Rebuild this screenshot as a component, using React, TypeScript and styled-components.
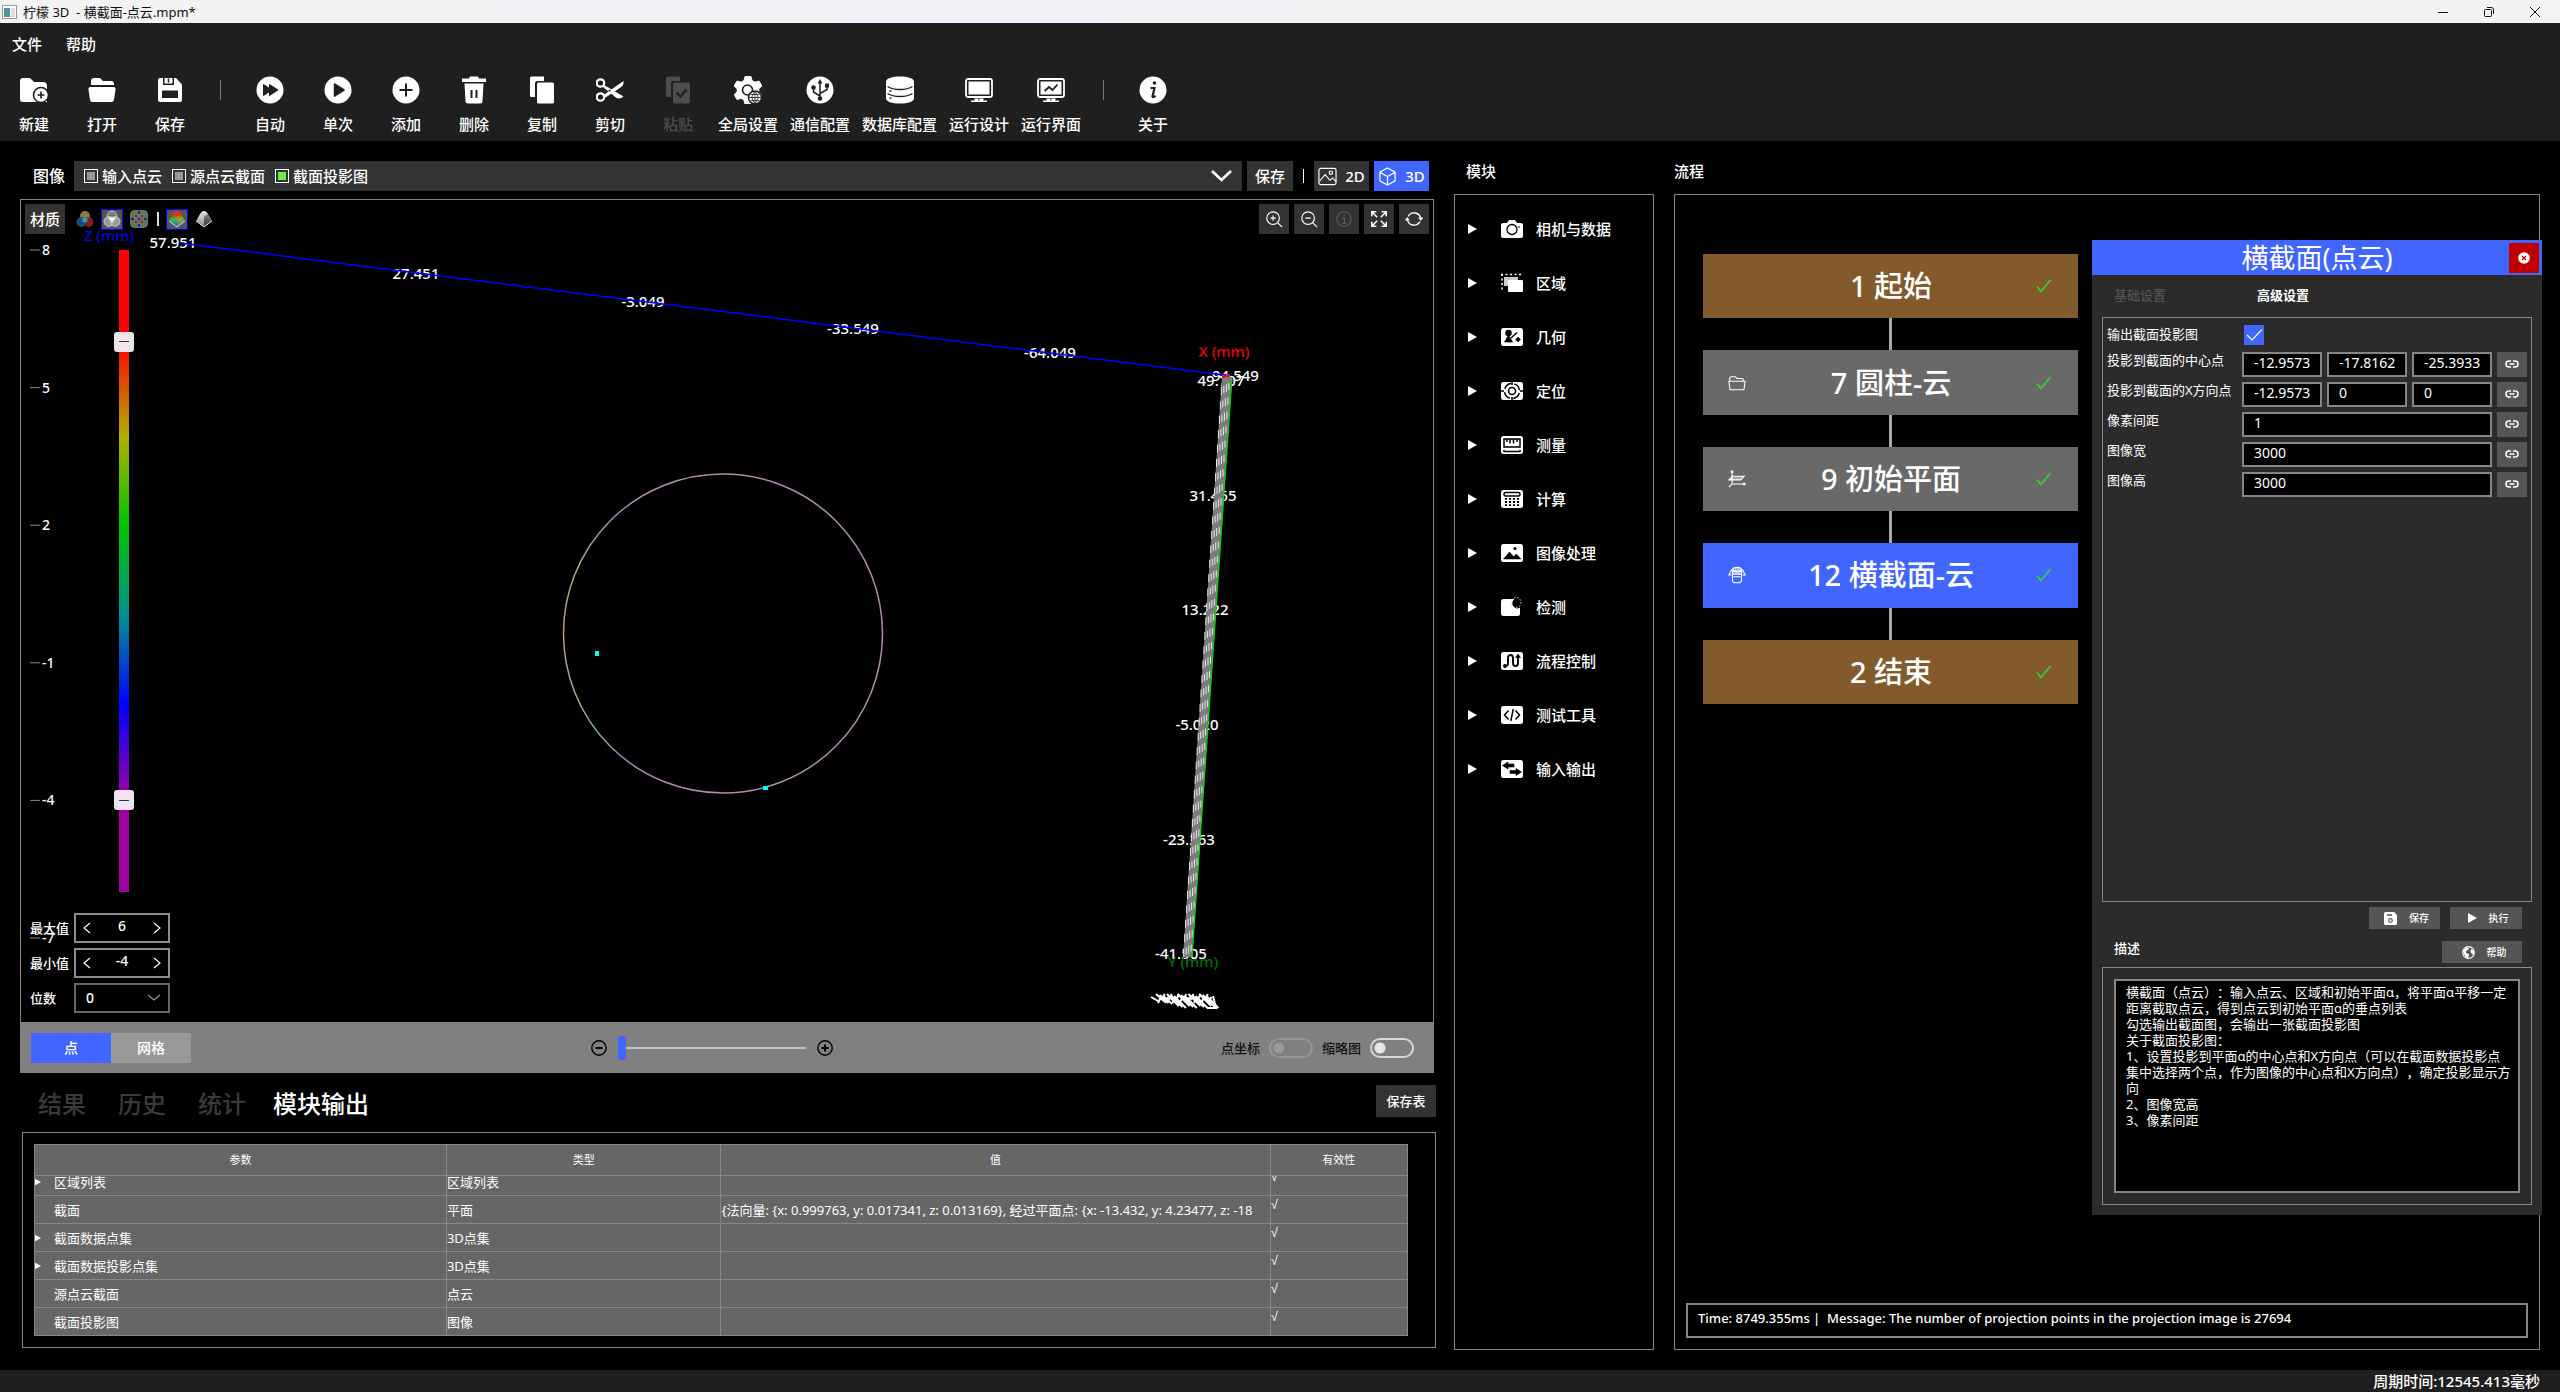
import React from "react";
import styled, { createGlobalStyle } from "styled-components";

const BLUE = "#4166ff";
const LINE = "#868686";
const BAR = "#1f1f1f";
const KEY = "#333333";

const GlobalStyle = createGlobalStyle`
  * { box-sizing: border-box; }
  body {
    margin: 0;
    background: #000;
    color: #fff;
    font: 500 15px/22px "Noto Sans", "Noto Sans CJK SC", sans-serif;
  }
  button, input, select, textarea { font: inherit; color: inherit; margin: 0; border-radius: 0; }
  button { border: 0; padding: 0; background: none; }
  svg { display: block; flex: none; }
`;

/* ---------- frame ---------- */
const Page = styled.div`
  min-height: 100vh;
  display: flex;
  flex-direction: column;
`;
const TitleBar = styled.header`
  height: 23px;
  display: flex;
  align-items: center;
  gap: 6px;
  padding: 0 2px;
  color: #111;
  background: linear-gradient(90deg, #f3f3f3, #f1f0f7 40%, #f3f1f3 55%, #f3f3f3);
  font-size: 13px;
  font-weight: 400;
  white-space: pre;
`;
const WindowKeys = styled.div`
  margin-left: auto;
  display: flex;
`;
const WindowKey = styled.button`
  width: 46px;
  height: 20px;
  display: grid;
  place-items: center;
`;
const MenuBar = styled.nav`
  height: 44px;
  display: flex;
  align-items: center;
  gap: 24px;
  padding: 0 12px 2px;
  background: ${BAR};
`;
const Toolbar = styled.div`
  height: 74px;
  display: flex;
  padding-top: 9px;
  background: ${BAR};
`;
const ToolKey = styled.button`
  min-width: 68px;
  padding: 0 6px;
  display: flex;
  flex-direction: column;
  align-items: center;
  gap: 9px;
  height: 60px;
  &:disabled { color: #4d4d4d; }
`;
const ToolSplit = styled.span`
  width: 1px;
  height: 20px;
  margin: 4px 15px 0 16px;
  background: #777;
`;
const Main = styled.main`
  flex: 1;
  display: grid;
  grid-template-columns: minmax(0, 1fr) 200px minmax(0, 866px);
  gap: 20px;
  padding: 20px;
`;
const StatusBar = styled.footer`
  height: 22px;
  padding-right: 20px;
  background: ${BAR};
  text-align: right;
`;

/* ---------- viewer ---------- */
const Left = styled.section`
  display: flex;
  flex-direction: column;
  min-width: 0;
`;
const SourceRow = styled.div`
  display: flex;
  align-items: center;
  height: 30px;
  gap: 5px;
  margin-bottom: 8px;
  padding: 0 5px 0 13px;
`;
const SourceName = styled.span`
  font-size: 16px;
  margin-right: 4px;
`;
const SourceBox = styled.div`
  flex: 1;
  height: 30px;
  display: flex;
  align-items: center;
  gap: 10px;
  padding: 0 10px;
  background: ${KEY};
`;
const SourceItem = styled.label`
  display: flex;
  align-items: center;
  gap: 4px;
`;
const SourceCheck = styled.input`
  appearance: none;
  width: 14px;
  height: 14px;
  border: 1px solid #fff;
  padding: 2px;
  background: #9a9a9a content-box;
  &:checked { background: #6cf04a content-box; }
`;
const Chevron = styled.button`
  margin-left: auto;
`;
const Key = styled.button<{ $w: number; $on?: boolean }>`
  width: ${(p) => p.$w}px;
  height: 30px;
  display: flex;
  align-items: center;
  justify-content: center;
  gap: 8px;
  background: ${(p) => (p.$on ? BLUE : KEY)};
  &:disabled { color: #5c5c5c; }
`;
const Bar = styled.span`
  width: 1px;
  height: 14px;
  background: #fff;
  margin: 0 5px;
`;
const Viewer = styled.div`
  flex: 1;
  display: flex;
  flex-direction: column;
  border: 1px solid ${LINE};
  border-bottom: 0;
`;
const Canvas = styled.div`
  position: relative;
  flex: 1;
  display: flex;
  flex-direction: column;
  justify-content: space-between;
`;
const Scene = styled.svg`
  position: absolute;
  inset: 0;
  width: 100%;
  height: 100%;
`;
const RangeLimit = styled.input`
  position: absolute;
  left: 93px;
  top: 40px;
  width: 20px;
  height: 662px;
  appearance: none;
  writing-mode: vertical-lr;
  direction: rtl;
  background: none;
  pointer-events: none;
  &::-webkit-slider-thumb {
    appearance: none;
    pointer-events: auto;
    width: 20px;
    height: 20px;
    border-radius: 3px;
    background: linear-gradient(#333, #333) center / 10px 1px no-repeat, rgba(245, 240, 245, 0.95);
  }
`;
const ViewTools = styled.div`
  position: relative;
  display: flex;
  align-items: center;
  padding: 4px;
  gap: 5px;
`;
const MaterialKeys = styled.div`
  display: flex;
  align-items: center;
  gap: 5px;
  margin: 0 auto 0 4px;
`;
const ShadeKey = styled.button<{ $on?: boolean }>`
  width: 22px;
  height: 21px;
  display: grid;
  place-items: center;
  border: 1px solid ${(p) => (p.$on ? "#0000ff" : "transparent")};
  background: ${(p) => (p.$on ? "#555" : "none")};
`;
const ShadeSplit = styled.span`
  width: 2px;
  height: 14px;
  margin: 0 2px;
  background: #ddd;
`;
const Params = styled.div`
  position: relative;
  display: grid;
  grid-template-columns: 44px 96px;
  row-gap: 5px;
  align-items: center;
  padding: 0 0 9px 9px;
  font-size: 13px;
`;
const Spin = styled.div<{ $dim?: boolean }>`
  display: flex;
  align-items: center;
  height: 30px;
  padding: 0 ${(p) => (p.$dim ? 8 : 5)}px;
  border: 2px solid ${(p) => (p.$dim ? "#666" : "#8c8c8c")};
  input, select {
    flex: 1;
    width: 40px;
    height: 22px;
    padding: 0 0 4px;
    border: 0;
    background: none;
    font-size: 14px;
    text-align: center;
    outline: 0;
  }
  select { appearance: none; text-align: left; padding: 0 2px; }
`;
const ViewFoot = styled.div`
  height: 51px;
  margin: 0 -1px;
  padding: 0 20px 0 11px;
  display: grid;
  grid-template-columns: 1fr auto 1fr;
  align-items: center;
  background: #808080;
`;
const Modes = styled.div`
  display: flex;
  font-size: 14px;
`;
const ModeKey = styled.button<{ $on?: boolean }>`
  width: 80px;
  height: 30px;
  background: ${(p) => (p.$on ? BLUE : "#999")};
`;
const PointSize = styled.div`
  display: flex;
  align-items: center;
  gap: 11px;
  margin-right: 21px;
`;
const PointRange = styled.input`
  appearance: none;
  width: 188px;
  height: 24px;
  background: linear-gradient(#c2c2c2, #c2c2c2) center / 100% 2px no-repeat;
  &::-webkit-slider-thumb {
    appearance: none;
    width: 8px;
    height: 24px;
    border-radius: 3px;
    background: ${BLUE};
  }
`;
const Switches = styled.div`
  display: flex;
  justify-content: flex-end;
  gap: 9px;
  color: #111;
  font-size: 13px;
`;
const SwitchLabel = styled.label`
  display: flex;
  align-items: center;
  gap: 9px;
`;
const Switch = styled.input`
  appearance: none;
  width: 44px;
  height: 20px;
  border: 2px solid #d8d8d8;
  border-radius: 10px;
  background: radial-gradient(circle at 8px 8px, #e6e6e6 5px, transparent 6px);
  &:disabled {
    border-color: #959595;
    background: radial-gradient(circle at 8px 8px, #999 5px, transparent 6px);
  }
`;

/* ---------- results ---------- */
const Tabs = styled.div`
  display: flex;
  height: 32px;
  margin: 12px -2px 15px 2px;
`;
const Tab = styled.button<{ $on?: boolean }>`
  min-width: 80px;
  padding: 6px 11px 0;
  font-size: 24px;
  line-height: 26px;
  color: ${(p) => (p.$on ? "#fff" : "#3a3a3a")};
`;
const SaveTable = styled.button`
  width: 60px;
  margin-left: auto;
  background: ${KEY};
  font-size: 13px;
`;
const TableFrame = styled.div`
  margin: 0 -2px 2px 2px;
  padding: 11px 27px 11px 11px;
  border: 1px solid ${LINE};
`;
const Table = styled.table`
  width: 100%;
  table-layout: fixed;
  border-collapse: collapse;
  background: #666;
  font-size: 13px;
  font-weight: 400;
  th, td { border: 1px solid ${LINE}; padding: 0; text-align: left; }
  th { height: 31px; font-size: 11px; font-weight: 400; text-align: center; }
  col:nth-child(1) { width: 30%; }
  col:nth-child(2) { width: 20%; }
  col:nth-child(3) { width: 40%; }
`;
const Clip = styled.div<{ $cut?: boolean }>`
  height: ${(p) => (p.$cut ? 19 : 27)}px;
  display: flex;
  align-items: flex-end;
  overflow: hidden;
`;
const CellText = styled.span`
  display: flex;
  align-items: center;
  flex: none;
  height: 27px;
  white-space: nowrap;
`;
const Mark = styled(CellText)`
  padding-bottom: 10px;
  font-family: "Liberation Sans", "Noto Sans CJK SC", sans-serif;
`;
const Fold = styled.span`
  width: 19px;
`;

/* ---------- modules ---------- */
const Column = styled.section`
  display: flex;
  flex-direction: column;
  gap: 13px;
  min-width: 0;
`;
const ColumnName = styled.h2<{ $inset?: boolean }>`
  margin: 0;
  padding-left: ${(p) => (p.$inset ? 12 : 0)}px;
  font: inherit;
  line-height: 20px;
`;
const Panel = styled.div`
  position: relative;
  flex: 1;
  display: flex;
  flex-direction: column;
  border: 1px solid ${LINE};
`;
const ModuleList = styled.ul`
  list-style: none;
  margin: 0;
  padding: 7px 13px;
`;
const ModuleKey = styled.button`
  width: 100%;
  height: 54px;
  display: flex;
  align-items: center;
  svg:first-child { margin-right: 24px; }
  svg:nth-child(2) { margin-right: 13px; }
`;

/* ---------- flow ---------- */
const Chain = styled.div`
  width: 375px;
  height: 450px;
  margin: 59px 0 auto 28px;
  display: flex;
  flex-direction: column;
  align-items: center;
`;
const Link = styled.span`
  width: 3px;
  height: 32px;
  background: #a8a8a8;
`;
const Node = styled.button<{ $tone: string }>`
  flex: 1;
  width: 100%;
  display: grid;
  grid-template-columns: 22px 1fr 22px;
  align-items: center;
  padding: 0 24px 0 25px;
  background: ${(p) => p.$tone};
  font-size: 29px;
  line-height: 40px;
`;
const Message = styled.output`
  height: 35px;
  margin: 0 11px 11px;
  padding: 2px 10px;
  border: 2px solid ${LINE};
  font-size: 13px;
  white-space: pre;
`;

/* ---------- dialog ---------- */
const Dialog = styled.div`
  position: absolute;
  top: 45px;
  right: -3px;
  width: 450px;
  background: #2b2b2b;
  font-size: 13px;
  padding-bottom: 10px;
`;
const DialogHead = styled.div`
  height: 35px;
  padding: 0 3px;
  display: grid;
  grid-template-columns: 30px 1fr 30px;
  align-items: center;
  background: ${BLUE};
`;
const DialogTitle = styled.h3`
  grid-column: 2;
  margin: 0;
  font-size: 27px;
  line-height: 34px;
  font-weight: 400;
  text-align: center;
`;
const Close = styled.button`
  height: 30px;
  display: grid;
  place-items: center;
  background: #c00000;
`;
const DialogTabs = styled.div`
  height: 42px;
  display: flex;
  gap: 91px;
  padding: 0 22px 2px;
`;
const DialogTab = styled.button<{ $on?: boolean }>`
  color: ${(p) => (p.$on ? "#fff" : "#595959")};
  font-weight: ${(p) => (p.$on ? 700 : 400)};
`;
const Form = styled.div`
  height: 585px;
  margin: 0 10px;
  padding: 4px 4px;
  border: 1px solid ${LINE};
  font-weight: 400;
`;
const Row = styled.div`
  height: 30px;
  display: grid;
  grid-template-columns: 130px minmax(0, 1fr) 30px;
  column-gap: 5px;
  align-items: center;
  label { padding-bottom: 8px; white-space: nowrap; }
`;
const CheckRow = styled(Row)`
  grid-template-columns: 137px 20px;
  column-gap: 0;
  height: 26px;
  margin-bottom: 1px;
  label { padding: 0 0 2px; }
`;
const Tick = styled.input`
  appearance: none;
  width: 20px;
  height: 20px;
  background: ${BLUE};
`;
const TickCell = styled.span`
  position: relative;
  height: 20px;
  svg { position: absolute; inset: 0; pointer-events: none; }
`;
const Fields = styled.div`
  display: flex;
  gap: 5px;
`;
const Field = styled.input`
  flex: 1;
  min-width: 0;
  height: 25px;
  padding: 0 10px 4px;
  border: 2px solid ${LINE};
  background: #000;
  font-size: 14px;
`;
const LinkKey = styled.button`
  height: 25px;
  display: grid;
  place-items: center;
  background: #555;
`;
const Actions = styled.div`
  display: flex;
  justify-content: flex-end;
  gap: 10px;
  padding: 5px 20px 12px;
`;
const Action = styled.button<{ $w: number }>`
  width: ${(p) => p.$w}px;
  height: 22px;
  display: flex;
  align-items: center;
  justify-content: center;
  gap: 12px;
  padding-left: 4px;
  background: #555;
  font-size: 10px;
`;
const NoteHead = styled.div`
  display: flex;
  justify-content: space-between;
  padding: 0 20px 4px 22px;
  label { line-height: 14px; }
`;
const NoteFrame = styled.div`
  margin: 0 10px;
  padding: 11px;
  border: 1px solid ${LINE};
`;
const Note = styled.textarea`
  display: block;
  width: 100%;
  height: 214px;
  padding: 3px 6px 3px 10px;
  border: 2px solid ${LINE};
  background: #000;
  resize: none;
  overflow: hidden;
  font-weight: 400;
  line-height: 16px;
  text-spacing-trim: space-all;
`;

/* ---------- icons ---------- */
const D = BAR;
const Big = ({ children }: { children: React.ReactNode }) => (
  <svg width="28" height="28" viewBox="0 0 28 28" fill="currentColor">{children}</svg>
);
const Disc = ({ children }: { children: React.ReactNode }) => (
  <Big><circle cx="14" cy="14" r="13.5" />{children}</Big>
);
const toolIcons: Record<string, React.ReactNode> = {
  新建: (
    <Big>
      <path d="M0 5a3 3 0 0 1 3-3h7l4 4h9a4 4 0 0 1 4 4v16H3a3 3 0 0 1-3-3z" />
      <circle cx="21" cy="19" r="7.5" stroke={D} strokeWidth="1.6" />
      <path d="M21 15.5v7M17.500 19h7" stroke={D} strokeWidth="1.6" />
    </Big>
  ),
  打开: (
    <Big>
      <path d="M3 9V5a3 3 0 0 1 3-3h6l3 3h8a3 3 0 0 1 3 3v1z" />
      <path d="M2 11h24a2 2 0 0 1 1.600 2L26 24a2.500 2.500 0 0 1-2.500 2h-19A2.500 2.500 0 0 1 2 24L.4 13A2 2 0 0 1 2 11z" />
    </Big>
  ),
  保存: (
    <Big>
      <path d="M2 4a2 2 0 0 1 2-2h16l6 6.500V24a2 2 0 0 1-2 2H4a2 2 0 0 1-2-2z" />
      <path d="M7 2v7h11V2M6 14.500h16V22H6z" fill={D} />
      <path d="M8.500 2h8v5.500h-8z" /><path d="M12.500 2.500v4" stroke={D} strokeWidth="1.500" />
    </Big>
  ),
  自动: <Disc><path d="M7.500 8.500l6 4v-4l8.500 5.500-8.500 5.500v-4l-6 4z" fill={D} stroke={D} strokeLinejoin="round" /></Disc>,
  单次: <Disc><path d="M10.500 8l9.500 6-9.500 6z" fill={D} stroke={D} strokeWidth="1.500" strokeLinejoin="round" /></Disc>,
  添加: <Disc><path d="M14 7.500v13M7.500 14h13" stroke={D} strokeWidth="2" /></Disc>,
  删除: (
    <Big>
      <path d="M2 2.500h7l1-2h8l1 2h7v3.500H2zM4.500 7.500h19L22.500 25a2.500 2.500 0 0 1-2.500 2.500H8A2.500 2.500 0 0 1 5.500 25z" />
      <path d="M11.500 14v8M16.500 14v8" stroke={D} strokeWidth="2" />
    </Big>
  ),
  复制: (
    <Big>
      <path d="M2 2a1.500 1.500 0 0 1 1.500-1.500H16V5H9.500A2.500 2.500 0 0 0 7 7.500V21H3.500A1.500 1.500 0 0 1 2 19.500z" />
      <rect x="9" y="6.500" width="17" height="21" rx="1.500" />
    </Big>
  ),
  剪切: (
    <Big>
      <g fill="none" stroke="currentColor" strokeWidth="2.200">
        <circle cx="4.500" cy="7" r="3.700" /><circle cx="4.500" cy="21" r="3.700" />
      </g>
      <path d="M7 19.500L27.500 5c.5 2.500-.5 5-3 6.500L9.500 21.500zM7 8.500L15 13l12.500 7.500c-2 2-4.500 2.500-7 1.500L7.500 11.500z" />
      <circle cx="13.500" cy="14.500" r="1" fill={D} />
    </Big>
  ),
  粘贴: (
    <Big>
      <path d="M2 2a1.500 1.500 0 0 1 1.500-1.500H16V5H9.500A2.500 2.500 0 0 0 7 7.500V21H3.500A1.500 1.500 0 0 1 2 19.500z" />
      <rect x="9" y="6.500" width="17" height="21" rx="1.500" />
      <path d="M12.500 16.500l4 4 6-7" stroke={D} strokeWidth="2.400" fill="none" />
    </Big>
  ),
  全局设置: (
    <Big>
      <path d="M11 .5h6l1 4 3 1.700 4-1.200 2.800 5-3 2.800v3l3 2.800-2.800 5-4-1.200-3 1.700-1 3.900h-6l-1-4-3-1.700-4 1.300-2.800-5 3-2.800v-3L.2 10 3 5l4 1.200 3-1.700z" strokeLinejoin="round" stroke="currentColor" />
      <circle cx="13.500" cy="14" r="5" fill="none" stroke={D} strokeWidth="1.600" />
      <circle cx="21" cy="21.500" r="6.500" stroke={D} strokeWidth="1.500" />
      <path d="M15 21.500h12M21 15.500v12M16.500 18.500h9M16.500 24.500h9M21 15.500c-4 4-4 8 0 12M21 15.500c4 4 4 8 0 12" fill="none" stroke={D} strokeWidth=".8" />
    </Big>
  ),
  通信配置: (
    <Disc>
      <path d="M14 5v18M14 20l-6.500-4v-4M14 17.500l7-4V9" fill="none" stroke={D} strokeWidth="1.500" />
      <path d="M14 3l2.500 4.500h-5z" fill={D} />
      <circle cx="14" cy="22.500" r="2.200" fill={D} /><circle cx="7.500" cy="11.500" r="2.300" fill={D} />
      <rect x="19" y="7.500" width="4" height="4" fill={D} />
    </Disc>
  ),
  数据库配置: (
    <Big>
      <path d="M0 5.500C0 2.500 6 .5 14 .5s14 2 14 5v17c0 3-6 5-14 5s-14-2-14-5z" />
      <path d="M1.500 10.500c6 4 19 4 25 0M1.500 17.500c6 4 19 4 25 0" fill="none" stroke={D} strokeWidth="1.500" />
      <path d="M3.500 15h2M3.500 22h2" stroke={D} strokeWidth="1.500" />
    </Big>
  ),
  运行设计: (
    <Big>
      <rect x="1" y="3" width="26" height="18" rx="2" fill="none" stroke="currentColor" strokeWidth="1.800" />
      <path d="M3.500 5.500h21v13h-21zM9.500 22.500h4v2h1v-2h4v2h3.500V26h-16v-1.500h3.500z" />
    </Big>
  ),
  运行界面: (
    <Big>
      <rect x="1" y="3" width="26" height="18" rx="2" fill="none" stroke="currentColor" strokeWidth="1.800" />
      <path d="M3.500 5.500h21v13h-21zM9.500 22.500h4v2h1v-2h4v2h3.500V26h-16v-1.500h3.500z" />
      <path d="M7.500 15l4.500-4 3.500 3 5-5.500" fill="none" stroke={D} strokeWidth="1.800" />
    </Big>
  ),
  关于: (
    <Disc>
      <circle cx="15.500" cy="7" r="1.800" fill={D} />
      <path d="M11.500 12h4l-2 8.500c0 1 1 1 3-.8" fill="none" stroke={D} strokeWidth="2.200" />
    </Disc>
  ),
};

const Small = ({ children }: { children: React.ReactNode }) => (
  <svg width="22" height="20" viewBox="0 0 22 20" fill="#fff">{children}</svg>
);
const Tile = ({ children }: { children: React.ReactNode }) => (
  <Small>
    <rect y="1" width="22" height="18" rx="2.500" />
    <g fill="none" stroke="#000" strokeWidth="1.500">{children}</g>
  </Small>
);
const modules: [string, React.ReactNode][] = [
  ["相机与数据", (
    <Small>
      <path d="M2 4h4l2-3h6l2 3h4a2 2 0 0 1 2 2v11a2 2 0 0 1-2 2H2a2 2 0 0 1-2-2V6a2 2 0 0 1 2-2z" />
      <circle cx="11" cy="10.500" r="5" fill="none" stroke="#000" strokeWidth="1.300" />
      <path d="M17 8h2" stroke="#000" />
    </Small>
  )],
  ["区域", (
    <Small>
      <path d="M0 1.500h20M1 1v18" stroke="#fff" strokeWidth="1.500" strokeDasharray="2 2.500" />
      <path d="M3 4h14v9H3z" fill="#ccc" /><rect x="7" y="7" width="15" height="12" rx="1" />
    </Small>
  )],
  ["几何", (
    <Tile>
      <circle cx="7.500" cy="6" r="2.500" fill="#000" />
      <path d="M7.500 8l4 7h-8zM17 10l2.500 2.500L17 15l-2.500-2.500z" fill="#000" strokeWidth=".6" />
      <path d="M10 11l6-5.500" />
    </Tile>
  )],
  ["定位", (
    <Tile>
      <circle cx="11" cy="10" r="3.500" /><circle cx="11" cy="10" r="7.500" strokeDasharray="8.500 3.300" strokeDashoffset="-2" />
      <path d="M11 1v3M11 16v3M0 10h3M19 10h3" />
    </Tile>
  )],
  ["测量", <Tile><path d="M3 4h16v8H3zM6 4v3M9 4v4.500M12.500 4v4.500M16 4v3M3 15v1.500h16V15" /></Tile>],
  ["计算", (
    <Tile>
      <rect x="3" y="3.500" width="16" height="3.500" rx="1.500" />
      <path d="M5 9v8M9 9v8M13 9v8M17 9v8" strokeWidth="2.200" strokeDasharray="1.800 1.300" />
    </Tile>
  )],
  ["图像处理", <Tile><path d="M2.500 16l6-7 4 4.500 3-2.500 4.500 5z" fill="#000" strokeWidth=".5" /><circle cx="14" cy="5.500" r=".8" fill="#000" /></Tile>],
  ["检测", (
    <Small>
      <rect y="2" width="19" height="17" rx="2.500" />
      <path d="M13 2.500c-3 3-2 8 3 9 2 0 3-1 4-2V1h-6z" fill="#000" />
      <circle cx="15" cy="5.500" r="5" fill="none" stroke="#ccc" strokeDasharray="1.500 1.500" />
    </Small>
  )],
  ["流程控制", (
    <Tile>
      <path d="M4 15c3 0 3-1 3-4V7c0-4 5-4 5 0v5c0 4 5 4 5 0V6" strokeWidth="1.900" />
      <circle cx="4" cy="15" r="1.200" fill="#000" /><path d="M17 3l2.500 3.500h-5z" fill="#000" strokeWidth=".5" />
    </Tile>
  )],
  ["测试工具", <Tile><path d="M7.500 5.500L3.500 10l4 4.500M14.500 5.500l4 4.500-4 4.500M12.300 4l-2.500 12" /></Tile>],
  ["输入输出", (
    <Tile>
      <path d="M1.500 6.500L7 3v2h6v3H7v2zM20.500 13L15 9.500v2H9v3h6v2z" fill="#000" strokeWidth=".6" />
    </Tile>
  )],
];

const Arrow = ({ size = 9 }: { size?: number }) => (
  <svg width={size} height="10" viewBox="0 0 9 10" fill="#fff"><path d="M0 0l9 5-9 5z" /></svg>
);
const Stroke = ({ w = 18, box = 20, width = 1.3, children }: { w?: number; box?: number; width?: number; children: React.ReactNode }) => (
  <svg width={w} height={w} viewBox={`0 0 ${box} ${box}`} fill="none" stroke="currentColor" strokeWidth={width}>{children}</svg>
);
const Angle = ({ d, dim }: { d: string; dim?: boolean }) => (
  <svg width="12" height="12" viewBox="0 0 12 12" fill="none" stroke={dim ? "#999" : "#fff"} strokeWidth="1.200"><path d={d} /></svg>
);
const Gem = ({ id, colors, left, right }: { id: string; colors: string[]; left: string; right: string }) => (
  <svg width="18" height="17" viewBox="0 0 18 17">
    <defs>
      <linearGradient id={id} x1="0" y1="0" x2="0" y2="1">
        {colors.map((c, i) => <stop key={c} offset={i / (colors.length - 1)} stopColor={c} />)}
      </linearGradient>
    </defs>
    <path d="M9 0c2 0 3 1.500 4 3l4 7-8 6-8-6 4-7c1-1.500 2-3 4-3z" fill={`url(#${id})`} />
    <path d="M5 3l4 3v9l-7-5z" fill={left} fillOpacity=".35" />
    <path d="M13 3L9 6v9l7-5z" fill={right} fillOpacity=".45" />
    <path d="M1 10l8 6 8-6" fill="none" stroke="#ddd" />
  </svg>
);

/* ---------- 3D scene ---------- */
const zLabels: [string, number, number][] = [
  ["57.951", 173, 243], ["27.451", 416, 274], ["-3.049", 643, 302],
  ["-33.549", 853, 329], ["-64.049", 1050, 353], ["-94.549", 1233, 376],
];
const yLabels: [string, number, number][] = [
  ["49.707", 1221, 381], ["31.465", 1213, 496], ["13.222", 1205, 610],
  ["-5.020", 1197, 725], ["-23.263", 1189, 840], ["-41.505", 1181, 954],
];
const hatch = Array.from({ length: 40 }, (_, i) => i);
const pile = Array.from({ length: 15 }, (_, i) => i);

const PlotScene = () => (
  <Scene viewBox="21 200 1412 822" preserveAspectRatio="xMinYMin meet" fontSize="15" fill="#fff" textAnchor="middle">
    <defs>
      <linearGradient id="heat" x1="0" y1="250" x2="0" y2="892" gradientUnits="userSpaceOnUse">
        <stop offset="0" stopColor="#ff0000" /><stop offset="0.143" stopColor="#ff0000" />
        <stop offset="0.292" stopColor="#b0b000" /><stop offset="0.428" stopColor="#00c400" />
        <stop offset="0.570" stopColor="#009090" /><stop offset="0.708" stopColor="#0000ff" />
        <stop offset="0.857" stopColor="#a000a0" /><stop offset="1" stopColor="#a000a0" />
      </linearGradient>
      <linearGradient id="ring" x1="563" y1="0" x2="883" y2="0" gradientUnits="userSpaceOnUse">
        <stop offset="0" stopColor="#b89c84" /><stop offset="0.050" stopColor="#a8b084" />
        <stop offset="0.090" stopColor="#80b088" /><stop offset="0.140" stopColor="#80a8a8" />
        <stop offset="0.170" stopColor="#8088b8" /><stop offset="0.230" stopColor="#b08cb0" />
        <stop offset="1" stopColor="#b08cb0" />
      </linearGradient>
    </defs>
    <rect x="119" y="250" width="10" height="642" fill="url(#heat)" />
    <g textAnchor="start" fontSize="14">
      {[8, 5, 2, -1, -4, -7].map((n, i) => (
        <g key={n}>
          <path d={`M30 ${250 + i * 137.6}h10`} stroke="#888" />
          <text x="42" y={255 + i * 137.6}>{n}</text>
        </g>
      ))}
    </g>
    <text x="109" y="241" fill="#0000e0">Z (mm)</text>
    {zLabels.map(([t, x, y]) => <text key={t} x={x} y={y + 5}>{t}</text>)}
    <path d="M180 243L1232 376" stroke="#0000ff" strokeWidth="1.500" />
    <text x="1224" y="357" fill="#f00000">X (mm)</text>
    {yLabels.map(([t, x, y]) => <text key={t} x={x} y={y + 5}>{t}</text>)}
    <text x="1193" y="967" fill="#007000">Y (mm)</text>
    <path d="M1222 377h10L1192 957h-9z" fill="#7c7c7c" />
    <g stroke="#e8e8e8" strokeWidth="1">
      {hatch.map((i) => {
        const y = 387 + i * 14.4;
        const x = 1222 - (y - 377) * 0.067;
        return <path key={i} d={`M${x} ${y}v8M${x + 2.500} ${y - 1}v7M${x + 5} ${y - 3}v8M${x + 7.500} ${y - 4}v7`} />;
      })}
    </g>
    <path d="M1232 377L1192 957" stroke="#00e000" strokeWidth="1.200" />
    <path d="M1222 377l8-2" stroke="#f00" strokeWidth="2" />
    <g fill="none" stroke="#fff" strokeWidth="2">
      {pile.map((i) => (
        <path key={i} d={`M${1156 + i * 3.600} ${994 + (i % 3)}l${i < 3 ? 9 : 12} ${i < 3 ? 8 : 12}M${1158 + i * 3.600} ${1003 - (i % 2) * 3}l3-6`} />
      ))}
      <path d="M1151 997l7 4M1207 1008h9l-3-12" />
    </g>
    <circle cx="723" cy="633.500" r="159.500" fill="none" stroke="url(#ring)" strokeWidth="1.500" />
    <path d="M595 651h4v5h-4zM763 786h5v4h-5z" fill="#00ffff" />
  </Scene>
);

const rows: [string, string, string, boolean][] = [
  ["区域列表", "区域列表", "", true],
  ["截面", "平面", "{法向量: {x: 0.999763, y: 0.017341, z: 0.013169}, 经过平面点: {x: -13.432, y: 4.23477, z: -18", false],
  ["截面数据点集", "3D点集", "", true],
  ["截面数据投影点集", "3D点集", "", true],
  ["源点云截面", "点云", "", false],
  ["截面投影图", "图像", "", false],
];

const nodes: [string, string, React.ReactNode][] = [
  ["1 起始", "#835a2c", null],
  ["7 圆柱-云", "#696969", (
    <Stroke key="f" width={1.2}><path d="M2 8V4.500A1.500 1.500 0 0 1 3.500 3H8l2 2h5.500A1.500 1.500 0 0 1 17 6.500V8M1 8h18l-1 8a1.500 1.500 0 0 1-1.500 1.500h-13A1.500 1.500 0 0 1 2 16z" /></Stroke>
  )],
  ["9 初始平面", "#696969", (
    <Stroke key="a" width={1.2}><path d="M4.500 1v14.500H19M4.500 15.500L1 19" /><path d="M1 11l4-4h13l-4 4z" fill="#fff6" /><circle cx="4.500" cy="2" r="1" /><circle cx="18" cy="15.500" r="1" /></Stroke>
  )],
  ["12 横截面-云", BLUE, (
    <Stroke key="c" width={1.2}><ellipse cx="10" cy="4" rx="5" ry="2.500" fill="#fff8" /><path d="M5 6h10v3H5z" fill="#fff6" /><path d="M5 4v12c0 3.500 10 3.500 10 0V4M4 4L1 10h3M16 4l3 6h-3M6 12h8" /></Stroke>
  )],
  ["2 结束", "#835a2c", null],
];

const fields: [string, string[]][] = [
  ["投影到截面的中心点", ["-12.9573", "-17.8162", "-25.3933"]],
  ["投影到截面的X方向点", ["-12.9573", "0", "0"]],
  ["像素间距", ["1"]],
  ["图像宽", ["3000"]],
  ["图像高", ["3000"]],
];

const note = `横截面（点云）：输入点云、区域和初始平面α，将平面α平移一定距离截取点云，得到点云到初始平面α的垂点列表
勾选输出截面图，会输出一张截面投影图
关于截面投影图：
1、设置投影到平面α的中心点和X方向点（可以在截面数据投影点集中选择两个点，作为图像的中心点和X方向点），确定投影显示方向
2、图像宽高
3、像素间距`;

export default function App() {
  const key = (name: string) => (
    <ToolKey key={name} disabled={name === "粘贴"}>{toolIcons[name]}{name}</ToolKey>
  );
  return (
    <Page>
      <GlobalStyle />
      <TitleBar>
        <svg width="15" height="14" viewBox="0 0 15 14">
          <rect x=".5" y=".5" width="14" height="13" fill="#fff" stroke="#999" />
          <path d="M2 3h6v9H2z" fill="#4a9a90" /><path d="M9 3h4v9H9z" fill="#ddd" /><path d="M2 3h6v4H2z" fill="#5b8cb8" />
        </svg>
        <span>{"柠檬 3D  - 横截面-点云.mpm*"}</span>
        <WindowKeys>
          <WindowKey aria-label="最小化"><Stroke w={10} box={10} width={1}><path d="M0 5.500h10" /></Stroke></WindowKey>
          <WindowKey aria-label="还原"><Stroke w={10} box={10} width={1}><rect x=".5" y="2.500" width="7" height="7" rx="1" /><path d="M3 .5h4.500a2 2 0 0 1 2 2V7" /></Stroke></WindowKey>
          <WindowKey aria-label="关闭"><Stroke w={10} box={10} width={1}><path d="M0 0l10 10M10 0L0 10" /></Stroke></WindowKey>
        </WindowKeys>
      </TitleBar>
      <MenuBar><button>文件</button><button>帮助</button></MenuBar>
      <Toolbar>
        {["新建", "打开", "保存"].map(key)}
        <ToolSplit />
        {["自动", "单次", "添加", "删除", "复制", "剪切", "粘贴", "全局设置", "通信配置", "数据库配置", "运行设计", "运行界面"].map(key)}
        <ToolSplit />
        {key("关于")}
      </Toolbar>

      <Main>
        <Left>
          <SourceRow>
            <SourceName>图像</SourceName>
            <SourceBox>
              <SourceItem><SourceCheck type="checkbox" />输入点云</SourceItem>
              <SourceItem><SourceCheck type="checkbox" />源点云截面</SourceItem>
              <SourceItem><SourceCheck type="checkbox" defaultChecked />截面投影图</SourceItem>
              <Chevron aria-label="展开">
                <svg width="21" height="12" viewBox="0 0 21 12" fill="none" stroke="#fff" strokeWidth="2.600"><path d="M1 1l9.500 9L20 1" /></svg>
              </Chevron>
            </SourceBox>
            <Key $w={46}>保存</Key>
            <Bar />
            <Key $w={55}>
              <Stroke w={19} width={1.2}><rect x="1" y="1.500" width="18" height="17" rx="2" /><circle cx="13.500" cy="6" r="1.800" /><path d="M1.500 15l6-7 5 6 3-2.500 3.500 4" /></Stroke>2D
            </Key>
            <Key $w={55} $on>
              <Stroke w={19} width={1.3}><path d="M10 1l8 4.500v9L10 19l-8-4.500v-9zM2 5.500l8 4.500 8-4.500M10 10v9" /></Stroke>3D
            </Key>
          </SourceRow>

          <Viewer>
            <Canvas>
              <PlotScene />
              <RangeLimit type="range" aria-label="色标上限" min={-6} max={8} defaultValue={6} />
              <RangeLimit type="range" aria-label="色标下限" min={-6} max={8} defaultValue={-4} />
              <ViewTools>
                <Key $w={40}>材质</Key>
                <MaterialKeys>
                  <ShadeKey aria-label="彩色">
                    <svg width="18" height="18" viewBox="0 0 18 18"><circle cx="9" cy="6" r="5" fill="#8a8046" /><circle cx="5.500" cy="12" r="5" fill="#155a92" fillOpacity=".9" /><circle cx="12.500" cy="12" r="5" fill="#8c2024" fillOpacity=".9" /><circle cx="9" cy="10" r="2.500" fill="#2aa0b0" /></svg>
                  </ShadeKey>
                  <ShadeKey $on aria-label="灰度">
                    <svg width="18" height="18" viewBox="0 0 18 18" stroke="#ccc"><circle cx="9" cy="6" r="4.800" fill="#777" /><circle cx="5.800" cy="11.500" r="4.800" fill="#aaa" fillOpacity=".8" /><circle cx="12.200" cy="11.500" r="4.800" fill="#aaa" fillOpacity=".8" /><path d="M5 7l8 .500-4 5z" fill="#fff" /></svg>
                  </ShadeKey>
                  <ShadeKey aria-label="网格色">
                    <svg width="18" height="18" viewBox="0 0 18 18"><rect x=".5" y=".5" width="17" height="17" rx="4" fill="#4d8040" stroke="#777" /><path d="M4.500 4.500h3v3h-3zM10.500 10.500h3v3h-3zM10.500 4.500h3v3h-3zM4.500 10.500h3v3h-3z" fill="#8c2020" /><path d="M7.500 1h3v3h-3zM7.500 7.500h3v3h-3zM1 7.500h3v3H1zM14 7.500h3v3h-3zM7.500 14h3v3h-3z" fill="#2020a0" /><path d="M4.500 1v16M7.500 1v16M10.500 1v16M13.500 1v16M1 4.500h16M1 7.500h16M1 10.500h16M1 13.500h16" stroke="#777" strokeWidth=".8" /></svg>
                  </ShadeKey>
                  <ShadeSplit />
                  <ShadeKey $on aria-label="高度色">
                    <Gem id="gem-height" colors={["#f03020", "#f02010", "#50c030", "#2090c0", "#2040e0"]} left="#30b040" right="#e08010" />
                  </ShadeKey>
                  <ShadeKey aria-label="单色">
                    <Gem id="gem-mono" colors={["#eeeeee", "#bbbbbb", "#777777", "#555555"]} left="#ffffff" right="#222222" />
                  </ShadeKey>
                </MaterialKeys>
                <Key $w={30} aria-label="放大"><Stroke><circle cx="9" cy="9" r="7" /><path d="M14 14l5 5M9 6v6M6 9h6" /></Stroke></Key>
                <Key $w={30} aria-label="缩小"><Stroke><circle cx="9" cy="9" r="7" /><path d="M14 14l5 5M6 9h6" /></Stroke></Key>
                <Key $w={30} disabled aria-label="信息"><Stroke><circle cx="10" cy="10" r="8" /><path d="M8 9h2.500v6M7.500 15h5.500M9.500 5.500h1.500" /></Stroke></Key>
                <Key $w={30} aria-label="全屏"><Stroke width={1.7}><path d="M2 7V2h5M2 2l6 6M13 2h5v5M18 2l-6 6M2 13v5h5M2 18l6-6M13 18h5v-5M18 18l-6-6" /></Stroke></Key>
                <Key $w={30} aria-label="重置"><Stroke width={1.5}><path d="M3.500 7a7.500 7.500 0 0 1 14 3M16.500 13a7.500 7.500 0 0 1-14-3" /><path d="M0 11.500h5L2.500 8zM20 8.500h-5l2.500 3.500z" fill="currentColor" strokeWidth=".3" /></Stroke></Key>
              </ViewTools>
              <Params>
                <label htmlFor="hi">最大值</label>
                <Spin>
                  <button aria-label="减"><Angle d="M9 1L3 6l6 5" /></button>
                  <input id="hi" defaultValue="6" />
                  <button aria-label="加"><Angle d="M3 1l6 5-6 5" /></button>
                </Spin>
                <label htmlFor="lo">最小值</label>
                <Spin>
                  <button aria-label="减"><Angle d="M9 1L3 6l6 5" /></button>
                  <input id="lo" defaultValue="-4" />
                  <button aria-label="加"><Angle d="M3 1l6 5-6 5" /></button>
                </Spin>
                <label htmlFor="digits">位数</label>
                <Spin $dim>
                  <select id="digits" defaultValue="0"><option>0</option></select>
                  <Angle dim d="M0 3l6 5 6-5" />
                </Spin>
              </Params>
            </Canvas>
            <ViewFoot>
              <Modes><ModeKey $on>点</ModeKey><ModeKey>网格</ModeKey></Modes>
              <PointSize>
                <svg width="16" height="16" viewBox="0 0 16 16" fill="none" stroke="#000" strokeWidth="1.400"><circle cx="8" cy="8" r="7.200" /><path d="M4.500 8h7" strokeWidth="2" /></svg>
                <PointRange type="range" aria-label="点大小" defaultValue={0} />
                <svg width="16" height="16" viewBox="0 0 16 16" fill="none" stroke="#000" strokeWidth="1.400"><circle cx="8" cy="8" r="7.200" /><path d="M4.500 8h7M8 4.500v7" strokeWidth="2" /></svg>
              </PointSize>
              <Switches>
                <SwitchLabel>点坐标<Switch type="checkbox" disabled /></SwitchLabel>
                <SwitchLabel>缩略图<Switch type="checkbox" /></SwitchLabel>
              </Switches>
            </ViewFoot>
          </Viewer>

          <Tabs>
            <Tab>结果</Tab><Tab>历史</Tab><Tab>统计</Tab><Tab $on>模块输出</Tab>
            <SaveTable>保存表</SaveTable>
          </Tabs>
          <TableFrame>
            <Table>
              <colgroup><col /><col /><col /><col /></colgroup>
              <thead><tr><th>参数</th><th>类型</th><th>值</th><th>有效性</th></tr></thead>
              <tbody>
                {rows.map(([name, kind, value, fold], i) => (
                  <tr key={name}>
                    <td><Clip $cut={i === 0}><CellText><Fold>{fold && <Arrow size={6} />}</Fold>{name}</CellText></Clip></td>
                    <td><Clip $cut={i === 0}><CellText>{kind}</CellText></Clip></td>
                    <td><Clip $cut={i === 0}><CellText>{value}</CellText></Clip></td>
                    <td><Clip $cut={i === 0}><Mark>√</Mark></Clip></td>
                  </tr>
                ))}
              </tbody>
            </Table>
          </TableFrame>
        </Left>

        <Column>
          <ColumnName $inset>模块</ColumnName>
          <Panel>
            <ModuleList>
              {modules.map(([name, icon]) => (
                <li key={name}><ModuleKey><Arrow />{icon}{name}</ModuleKey></li>
              ))}
            </ModuleList>
          </Panel>
        </Column>

        <Column>
          <ColumnName>流程</ColumnName>
          <Panel>
            <Chain>
              {nodes.map(([name, tone, icon], i) => (
                <React.Fragment key={name}>
                  {i > 0 && <Link />}
                  <Node $tone={tone}>
                    <span>{icon}</span>
                    <span>{name}</span>
                    <svg width="22" height="16" viewBox="0 0 22 16" fill="none" stroke="#32d232" strokeWidth="1.700"><path d="M5 8.500l4 5L18.500 2" /></svg>
                  </Node>
                </React.Fragment>
              ))}
            </Chain>
            <Message>{"Time: 8749.355ms |  Message: The number of projection points in the projection image is 27694"}</Message>

            <Dialog role="dialog" aria-label="横截面(点云)">
              <DialogHead>
                <DialogTitle>横截面(点云)</DialogTitle>
                <Close aria-label="关闭">
                  <svg width="12" height="12" viewBox="0 0 12 12"><circle cx="6" cy="6" r="5.800" fill="#fff" /><path d="M4 4l4 4M8 4L4 8" stroke="#c00000" strokeWidth="1.300" /></svg>
                </Close>
              </DialogHead>
              <DialogTabs><DialogTab>基础设置</DialogTab><DialogTab $on>高级设置</DialogTab></DialogTabs>
              <Form>
                <CheckRow>
                  <label htmlFor="out">输出截面投影图</label>
                  <TickCell>
                    <Tick id="out" type="checkbox" defaultChecked />
                    <svg width="20" height="20" viewBox="0 0 20 20" fill="none" stroke="#fff" strokeWidth="1.200"><path d="M3 10l5 5L18 4.500" /></svg>
                  </TickCell>
                </CheckRow>
                {fields.map(([name, values], r) => (
                  <Row key={name}>
                    <label htmlFor={`f${r}`}>{name}</label>
                    <Fields>
                      {values.map((v, c) => <Field key={c} id={c ? undefined : `f${r}`} aria-label={c ? name : undefined} defaultValue={v} />)}
                    </Fields>
                    <LinkKey aria-label="链接">
                      <svg width="14" height="8" viewBox="0 0 14 8" fill="none" stroke="#fff" strokeWidth="1.500"><path d="M6 1H4a3 3 0 0 0 0 6h2M8 1h2a3 3 0 0 1 0 6H8M4.500 4h5" /></svg>
                    </LinkKey>
                  </Row>
                ))}
              </Form>
              <Actions>
                <Action $w={71}>
                  <svg width="13" height="13" viewBox="0 0 13 13" fill="#fff"><path d="M1.500 0H10l3 3v8.500a1.500 1.500 0 0 1-1.500 1.500h-10A1.500 1.500 0 0 1 0 11.500v-10A1.500 1.500 0 0 1 1.500 0z" /><path d="M3 3h5" stroke="#555" strokeWidth="1.500" /><circle cx="6.500" cy="8.500" r="1.800" fill="none" stroke="#555" strokeWidth="1.200" /></svg>保存
                </Action>
                <Action $w={72}><Arrow />执行</Action>
              </Actions>
              <NoteHead>
                <label htmlFor="note">描述</label>
                <Action $w={80}>
                  <svg width="13" height="13" viewBox="0 0 13 13"><circle cx="6.500" cy="6.500" r="5.800" fill="#555" stroke="#fff" strokeWidth="1.200" /><path d="M1 5l3-3.500 3 .5-1 2-2 1v2l3 1-.5 3-1.500 1.500L2 8zM9 3l3 2v4l-2-1-1.500-2z" fill="#fff" /></svg>帮助
                </Action>
              </NoteHead>
              <NoteFrame><Note id="note" readOnly value={note} /></NoteFrame>
            </Dialog>
          </Panel>
        </Column>
      </Main>
      <StatusBar>周期时间:12545.413毫秒</StatusBar>
    </Page>
  );
}
